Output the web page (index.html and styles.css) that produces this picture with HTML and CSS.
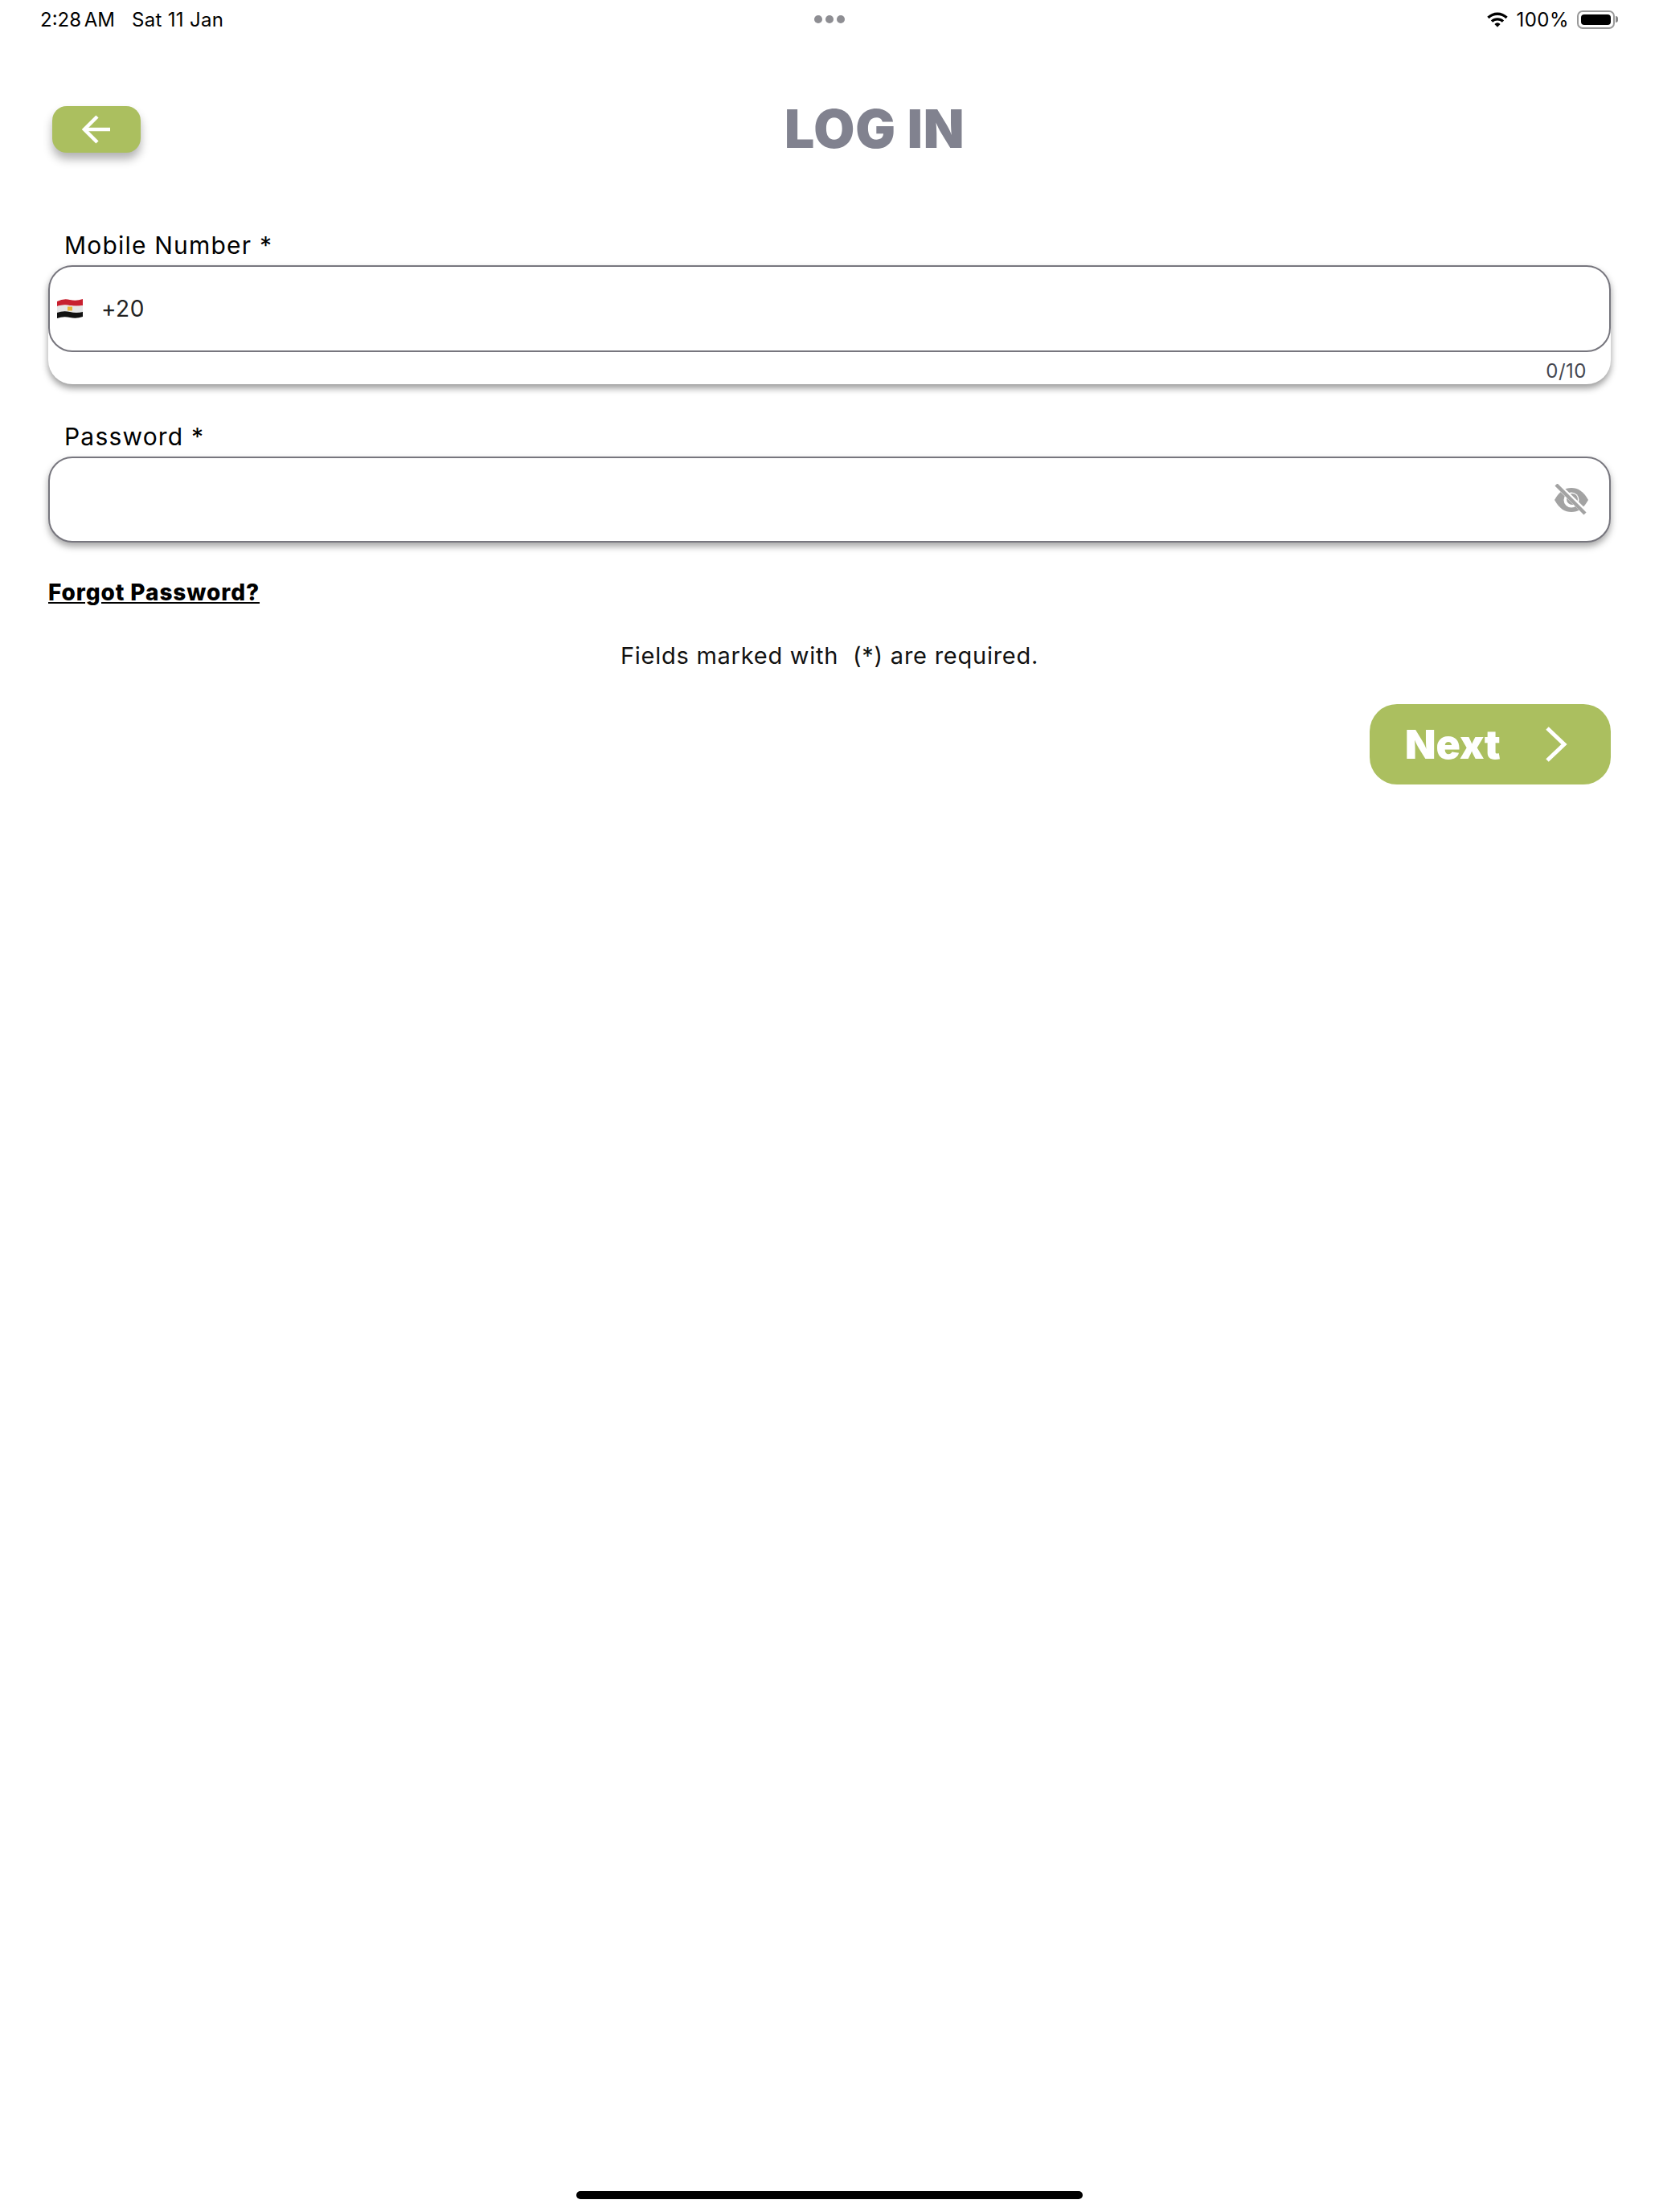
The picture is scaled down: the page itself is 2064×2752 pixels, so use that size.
FILE: index.html
```html
<!DOCTYPE html>
<html lang="en">
<head>
<meta charset="UTF-8">
<meta name="viewport" content="width=device-width, initial-scale=1.0">
<title>Log In</title>
<link rel="stylesheet" href="styles.css">
</head>
<body>
<div class="page">
    <div class="status-bar">
        <div class="status-left"><span class="time">2:28 AM</span><span class="date">Sat 11 Jan</span></div>
        <div class="status-dots"><i></i><i></i><i></i></div>
        <div class="status-right">
            <svg class="wifi" width="28" height="20" viewBox="0 0 30 22">
                <path d="M1 7.5 A20 20 0 0 1 29 7.5 L26.4 10.2 A16.4 16.4 0 0 0 3.6 10.2 Z" fill="#000"/>
                <path d="M6 12.6 A13 13 0 0 1 24 12.6 L21.4 15.2 A9.4 9.4 0 0 0 8.6 15.2 Z" fill="#000"/>
                <path d="M11 17.6 A6 6 0 0 1 19 17.6 L15 21.6 Z" fill="#000"/>
            </svg>
            <span class="percent">100%</span>
            <div class="battery"><div class="battery-fill"></div></div>
            <div class="battery-tip"></div>
        </div>
    </div>

    <div class="header">
        <button class="back-button">
            <svg width="36" height="36" viewBox="0 0 36 36" fill="none" stroke="#fff" stroke-width="4.5">
                <path d="M35 18 H3"/>
                <path d="M19 2 L3 18 L19 34"/>
            </svg>
        </button>
        <h1 class="title">LOG IN</h1>
    </div>

    <form class="login-form">
        <label class="field-label">Mobile Number *</label>
        <div class="field-wrap">
            <div class="field phone-field">
                <svg class="flag" width="34" height="26" viewBox="0 0 34 26">
                    <path d="M1 4 Q9 0 17 2 T33 1 V9 Q25 10 17 9 T1 10 Z" fill="#c8202f"/>
                    <path d="M1 10 Q9 7 17 9 T33 9 V17 Q25 18 17 17 T1 18 Z" fill="#e6e6e6"/>
                    <path d="M1 18 Q9 15 17 17 T33 17 V23 Q25 26 17 24 T1 25 Z" fill="#111"/>
                    <rect x="14" y="10.5" width="6" height="5" fill="#e8b53a"/>
                </svg>
                <span class="dial-code">+20</span>
            </div>
            <div class="counter">0/10</div>
        </div>

        <label class="field-label password-label">Password *</label>
        <div class="field password-field">
            <svg class="eye" width="46" height="40" viewBox="0 0 46 40">
                <path d="M2 20 C8 9 15 5 23 5 C31 5 38 9 44 20 C38 31 31 35 23 35 C15 35 8 31 2 20 Z" fill="#a3a3a3"/>
                <circle cx="23" cy="20" r="9.5" fill="#fff"/>
                <circle cx="24" cy="19" r="7" fill="#a3a3a3"/>
                <path d="M4 0 L42 37" stroke="#fff" stroke-width="7"/>
                <path d="M4 1 L40 37" stroke="#a3a3a3" stroke-width="4.5"/>
            </svg>
        </div>

        <a class="forgot" href="#">Forgot Password?</a>
        <p class="required-note">Fields marked with &nbsp;(*) are required.</p>

        <div class="actions">
            <button type="button" class="next-button">
                <span>Next</span>
                <svg width="28" height="44" viewBox="0 0 28 44" fill="none" stroke="#fff" stroke-width="5">
                    <path d="M3 2 L24 22 L3 42"/>
                </svg>
            </button>
        </div>
    </form>

    <div class="home-indicator"></div>
</div>
</body>
</html>
```

FILE: styles.css
```css
* {
    box-sizing: border-box;
}
body {
    margin: 0;
    padding: 0;
    background-color: #fff;
    font-family: "Inter", "Liberation Sans", sans-serif;
    color: #000;
}
.page {
    height: 2752px;
    display: flex;
    flex-direction: column;
}

/* status bar */
.status-bar {
    height: 48px;
    padding: 0 50px;
    display: grid;
    grid-template-columns: 1fr auto 1fr;
    align-items: center;
    font-size: 24px;
}
.time {
    margin-right: 21px;
    word-spacing: -3px;
}
.date {
    letter-spacing: 0.3px;
}
.status-dots {
    display: flex;
    gap: 4px;
}
.status-dots i {
    width: 10px;
    height: 10px;
    border-radius: 50%;
    background-color: #8e8e93;
}
.status-right {
    display: flex;
    justify-content: flex-end;
    align-items: center;
    margin-right: 1px;
}
.wifi {
    margin-right: 9px;
}
.percent {
    letter-spacing: 0.5px;
}
.battery {
    width: 47px;
    height: 23px;
    margin-left: 10px;
    padding: 3px;
    border: 2px solid #999;
    border-radius: 7px;
}
.battery-fill {
    height: 100%;
    background-color: #000;
    border-radius: 4px;
}
.battery-tip {
    width: 3px;
    height: 8px;
    margin-left: 1px;
    background-color: #888;
    border-radius: 0 3px 3px 0;
}

/* header */
.header {
    position: relative;
    margin-top: 84px;
    height: 58px;
    padding-left: 65px;
}
.back-button {
    width: 110px;
    height: 58px;
    padding: 0;
    border: none;
    border-radius: 18px;
    background-color: #abbf5f;
    box-shadow: 0 8px 12px rgba(0, 0, 0, 0.3);
    display: flex;
    align-items: center;
    justify-content: center;
}
.title {
    position: absolute;
    left: 976px;
    top: -12px;
    margin: 0;
    font-size: 66px;
    line-height: 80px;
    font-weight: 900;
    letter-spacing: 0.8px;
    color: #81828f;
}

/* form */
.login-form {
    padding: 0 60px;
    margin-top: 96px;
}
.field-label {
    display: block;
    margin-left: 20px;
    height: 44px;
    font-size: 30px;
    line-height: 38px;
    letter-spacing: 1.2px;
}
.password-label {
    margin-top: 46px;
}
.field-wrap {
    height: 148px;
    border-radius: 30px;
    background-color: #fff;
    box-shadow: 0 5px 8px rgba(0, 0, 0, 0.4);
}
.field {
    height: 108px;
    border: 2px solid #77767e;
    border-radius: 30px;
    background-color: #fff;
    display: flex;
    align-items: center;
}
.phone-field {
    padding-left: 8px;
}
.dial-code {
    margin-left: 22px;
    font-size: 28px;
    color: #222;
    letter-spacing: 0.5px;
}
.counter {
    margin: 10px 30px 0 0;
    text-align: right;
    font-size: 24px;
    line-height: 28px;
    letter-spacing: 0.5px;
    color: #45464f;
}
.password-field {
    height: 107px;
    justify-content: flex-end;
    padding-right: 24px;
    box-shadow: 0 5px 8px rgba(0, 0, 0, 0.35);
}
.forgot {
    display: inline-block;
    margin-top: 44px;
    font-size: 28px;
    line-height: 36px;
    font-weight: 800;
    letter-spacing: 0.9px;
    color: #000;
}
.required-note {
    margin: 41px 0 0;
    text-align: center;
    font-size: 29px;
    line-height: 40px;
    letter-spacing: 0.75px;
    color: #111;
}
.actions {
    display: flex;
    justify-content: flex-end;
    margin-top: 40px;
}
.next-button {
    width: 300px;
    height: 100px;
    padding: 0 54px 0 44px;
    border: none;
    border-radius: 34px;
    background-color: #abbf5f;
    color: #fff;
    font-family: "Inter", "Liberation Sans", sans-serif;
    font-size: 50px;
    font-weight: 900;
    display: flex;
    align-items: center;
    justify-content: space-between;
}
.home-indicator {
    width: 630px;
    height: 10px;
    margin: auto auto 16px;
    border-radius: 5px;
    background-color: #000;
}
```
